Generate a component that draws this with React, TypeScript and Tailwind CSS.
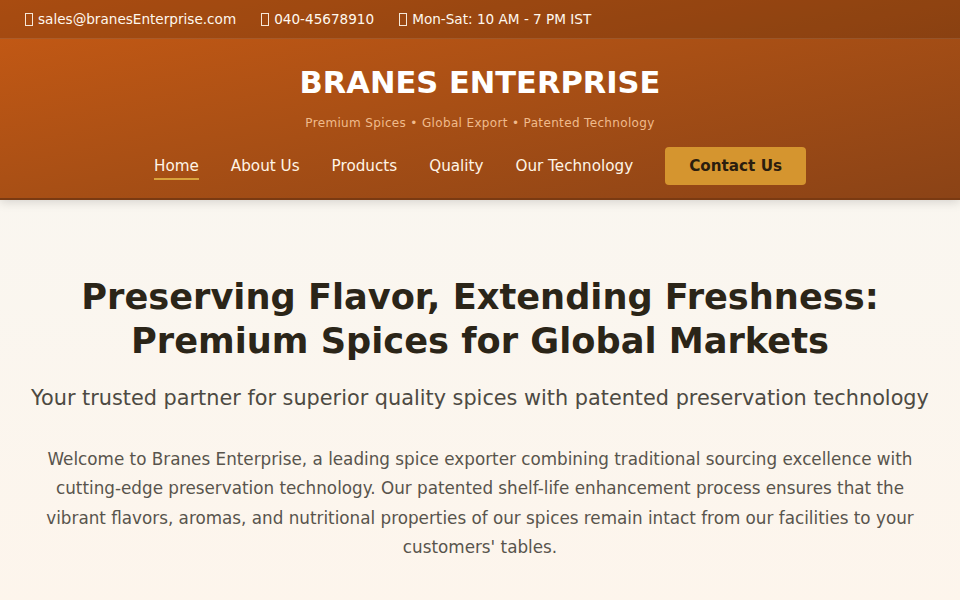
import React from 'react';

const navLinks = ['Home', 'About Us', 'Products', 'Quality', 'Our Technology'];

// glyph box, the icon font is missing in the original
function Tofu() {
  return <span aria-hidden className="inline-block w-[8px] h-[13px] border border-current align-[-2px] mr-[5px] opacity-90" />;
}

export default function App() {
  return (
    <div className="min-h-screen font-['DejaVu_Sans',sans-serif] bg-gradient-to-b from-[#f8f7f2] to-[#fdf5ec]">
      <header className="bg-gradient-to-br from-[#c75a14] via-[#a84f15] to-[#8b4316] text-white shadow-[0_2px_10px_rgba(0,0,0,0.15)] border-b-2 border-[#7a3a12]">
        <div className="bg-black/15 border-b border-white/10 h-[39px] flex items-center gap-[25px] px-[25px] text-[13.6px] text-[#fff8ee]">
          <span><Tofu />sales@branesEnterprise.com</span>
          <span><Tofu />040-45678910</span>
          <span><Tofu />Mon-Sat: 10 AM - 7 PM IST</span>
        </div>
        <div className="flex flex-col items-center pt-6 pb-[13px]">
          <h1 className="text-[30.5px] leading-[40px] font-bold">BRANES ENTERPRISE</h1>
          <p className="mt-[10px] text-[12px] leading-5 text-[#f0bb8c] tracking-[0.35px]">
            Premium Spices • Global Export • Patented Technology
          </p>
          <nav className="mt-[14px] flex items-center gap-8 text-[15.2px]">
            {navLinks.map((l, i) => (
              <a
                key={l}
                className={
                  i === 0
                    ? 'leading-6 text-[#fff5e6] border-b-2 border-[#d9a23c] mt-[2px]'
                    : 'leading-6 text-[#fff5e6]'
                }
              >
                {l}
              </a>
            ))}
            <a className="bg-[#d5952f] text-[#2b1d0e] font-bold px-6 py-[7px] leading-6 rounded-[4px]">Contact Us</a>
          </nav>
        </div>
      </header>

      <main className="px-4 pt-[75px] pb-12 text-center">
        <h2 className="text-[35.2px] leading-[44px] font-bold text-[#2b2518]">
          Preserving Flavor, Extending Freshness:
          <br />
          Premium Spices for Global Markets
        </h2>
        <p className="mt-5 text-[20.8px] leading-[30px] text-[#4d4a42]">
          Your trusted partner for superior quality spices with patented preservation technology
        </p>
        <p className="mt-8 mx-auto max-w-[880px] text-[16.8px] leading-[29.33px] text-[#58544c]">
          Welcome to Branes Enterprise, a leading spice exporter combining traditional sourcing excellence with
          cutting-edge preservation technology. Our patented shelf-life enhancement process ensures that the
          vibrant flavors, aromas, and nutritional properties of our spices remain intact from our facilities to
          your customers' tables.
        </p>
      </main>
    </div>
  );
}
